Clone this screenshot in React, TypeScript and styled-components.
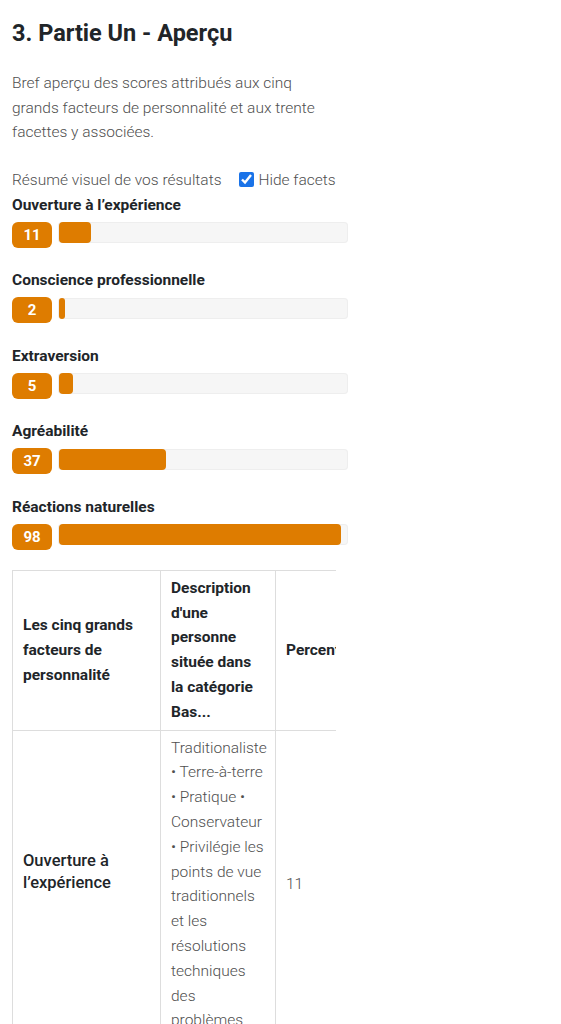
import React from "react";
import styled, { createGlobalStyle } from "styled-components";

const GlobalStyle = createGlobalStyle`
  body {
    margin: 0;
    background: #ffffff;
    font-family: Roboto, "Liberation Sans", Arial, sans-serif;
  }
`;

const Page = styled.main`
  padding: 19px 0 0 12px;
  width: 336px;
`;

const Title = styled.h2`
  margin: 0;
  font-size: 23.5px;
  line-height: 28px;
  font-weight: 700;
  color: #212529;
`;

const Intro = styled.p`
  margin: 24px 0 0;
  width: 324px;
  font-size: 15.5px;
  line-height: 24.6px;
  font-weight: 300;
  color: #4f4f4f;
`;

const SummaryRow = styled.div`
  display: flex;
  align-items: center;
  gap: 11px;
  margin-top: 25px;
  width: 330px;
  font-size: 15.5px;
  line-height: 20px;
  font-weight: 300;
  color: #4f4f4f;
`;

const Toggle = styled.label`
  display: flex;
  align-items: center;
  gap: 5px;
  margin-left: 6px;
`;

const Check = styled.input`
  margin: 0;
  width: 15px;
  height: 15px;
  accent-color: #1a73e8;
`;

const Factor = styled.section`
  margin-top: 5px;
  & + & {
    margin-top: 22.5px;
  }
`;

const FactorName = styled.div`
  font-size: 15.5px;
  line-height: 20px;
  font-weight: 700;
  color: #212529;
`;

const BarRow = styled.div`
  display: flex;
  align-items: center;
  gap: 6px;
  margin-top: 7px;
`;

const Badge = styled.span`
  display: flex;
  align-items: center;
  justify-content: center;
  width: 40px;
  height: 26px;
  border-radius: 6px;
  background: #de7c00;
  color: #ffffff;
  font-size: 15px;
  font-weight: 700;
`;

const Track = styled.div`
  width: 290px;
  height: 21px;
  margin-top: -4px;
  border-radius: 4px;
  background: #f6f6f6;
  box-shadow: inset 0 0 0 1px #eeeeee;
  display: flex;
  padding: 0 1px;
  box-sizing: border-box;
`;

const Fill = styled.div`
  height: 100%;
  min-width: 6px;
  border-radius: 4px;
  background: #de7c00;
`;

const TableWrap = styled.div`
  margin-top: 20px;
  width: 324px;
  overflow: hidden;
`;

const Table = styled.table`
  border-collapse: collapse;
  table-layout: fixed;
  width: 380px;
`;

const Cell = styled.td<{ $w?: number; $head?: boolean }>`
  width: ${(p) => (p.$w ? `${p.$w}px` : "auto")};
  border: 1px solid #dddddd;
  padding: 5px 10px;
  vertical-align: middle;
  text-align: left;
  font-size: 15.5px;
  line-height: 24.8px;
  font-weight: ${(p) => (p.$head ? 700 : 300)};
  color: ${(p) => (p.$head ? "#212529" : "#4f4f4f")};
`;

const FactorCell = styled(Cell)`
  padding-bottom: 29px;
  font-size: 16.5px;
  line-height: 22px;
  font-weight: 500;
  color: #212529;
`;

const factors = [
  { name: "Ouverture à l’expérience", score: 11 },
  { name: "Conscience professionnelle", score: 2 },
  { name: "Extraversion", score: 5 },
  { name: "Agréabilité", score: 37 },
  { name: "Réactions naturelles", score: 98 },
];

export default function App() {
  return (
    <>
      <GlobalStyle />
      <Page>
        <Title>3. Partie Un - Aperçu</Title>
        <Intro>
          Bref aperçu des scores attribués aux cinq grands facteurs de
          personnalité et aux trente facettes y associées.
        </Intro>
        <SummaryRow>
          <span>Résumé visuel de vos résultats</span>
          <Toggle>
            <Check type="checkbox" defaultChecked />
            Hide facets
          </Toggle>
        </SummaryRow>
        {factors.map((f) => (
          <Factor key={f.name}>
            <FactorName>{f.name}</FactorName>
            <BarRow>
              <Badge>{f.score}</Badge>
              <Track>
                <Fill style={{ width: `${f.score}%` }} />
              </Track>
            </BarRow>
          </Factor>
        ))}
        <TableWrap>
          <Table>
            <thead>
              <tr>
                <Cell as="th" $w={127} $head>
                  Les cinq grands facteurs de personnalité
                </Cell>
                <Cell as="th" $w={94} $head>
                  Description d'une personne située dans la catégorie Bas...
                </Cell>
                <Cell as="th" $head>
                  Percentile
                </Cell>
              </tr>
            </thead>
            <tbody>
              <tr>
                <FactorCell>Ouverture à l’expérience</FactorCell>
                <Cell>
                  Traditionaliste • Terre-à-terre • Pratique • Conservateur •
                  Privilégie les points de vue traditionnels et les
                  résolutions techniques des problèmes
                </Cell>
                <Cell>11</Cell>
              </tr>
            </tbody>
          </Table>
        </TableWrap>
      </Page>
    </>
  );
}
